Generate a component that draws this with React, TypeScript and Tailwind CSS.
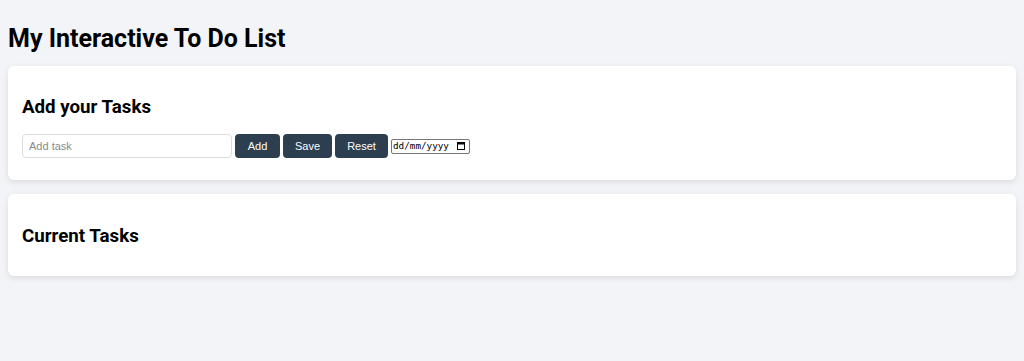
import React from "react";

export default function App() {
  return (
    <div className="min-h-[361px] w-full bg-[#f3f4f7] px-2 pt-[21px] pb-8 font-['Roboto',sans-serif] text-black">
      <h1 className="text-[25px] font-bold leading-[36px]">My Interactive To Do List</h1>
      <div className="mt-[9px] flex flex-col gap-[14px]">
        <div className="rounded-md bg-white px-[14px] pt-[30px] pb-[22px] shadow-[0_2px_6px_rgba(0,0,0,0.1)]">
          <h2 className="text-[18.72px] font-bold leading-[23px]">Add your Tasks</h2>
          <div className="mt-[15px] flex items-center gap-[3px] font-['Liberation_Sans',Arial,sans-serif] text-[11px]">
            <input
              type="text"
              placeholder="Add task"
              className="h-[24px] w-[210px] rounded-[4px] border border-[#dcdcdc] px-[6px] text-[11px] placeholder:text-[#8a8a8a] outline-none"
            />
            <button className="h-[24px] w-[45px] rounded-[4px] bg-[#2c3e50] text-white">Add</button>
            <button className="h-[24px] w-[49px] rounded-[4px] bg-[#2c3e50] text-white">Save</button>
            <button className="h-[24px] w-[53px] rounded-[4px] bg-[#2c3e50] text-white">Reset</button>
            <div className="flex h-[15px] w-[79px] items-center justify-between rounded-[2px] border border-[#767676] bg-white pl-[1px] pr-[4px] font-['DejaVu_Sans_Mono',monospace] text-[9.3px] leading-none">
              <span>dd/mm/yyyy</span>
              <svg width="8" height="8" viewBox="0 0 8 8" fill="none">
                <rect x="0.5" y="0.5" width="7" height="7" stroke="black" strokeWidth="1" />
                <rect x="0.5" y="0.5" width="7" height="2" fill="black" />
              </svg>
            </div>
          </div>
        </div>
        <div className="rounded-md bg-white px-[14px] pt-[31px] pb-[28px] shadow-[0_2px_6px_rgba(0,0,0,0.1)]">
          <h2 className="text-[18.72px] font-bold leading-[23px]">Current Tasks</h2>
        </div>
      </div>
    </div>
  );
}
